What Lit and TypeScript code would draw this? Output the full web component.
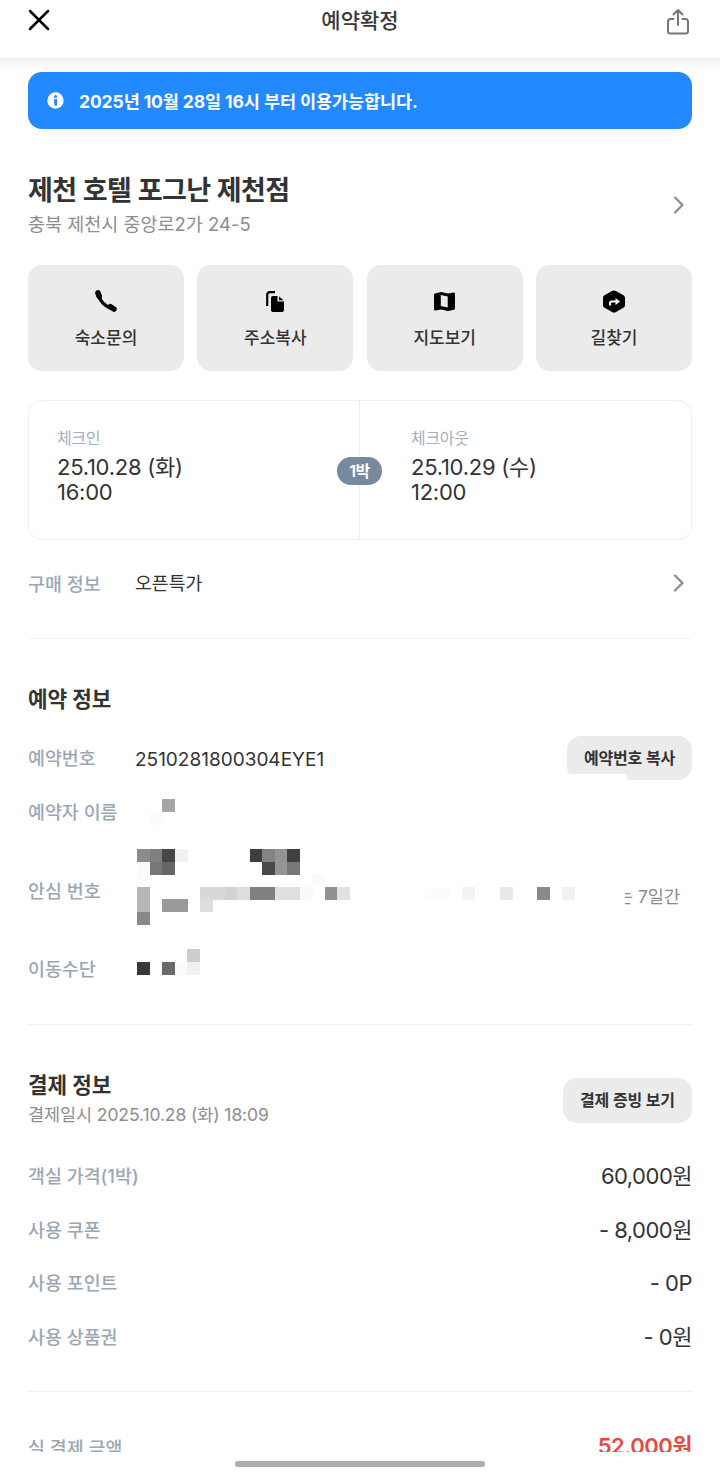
import { LitElement, html, css, svg } from "lit";
import { customElement } from "lit/decorators.js";

const cell = (x: number, y: number, c: string, w = 12.5, h = 12.5) =>
  html`<i class="cell" style="left:${x}px;top:${y}px;width:${w}px;height:${h}px;background:${c}"></i>`;

const mosaic: [number, number, string, number?, number?][] = [
  [162, 799, "#a6a6a6"], [150, 812, "#fbfbfb"],
  [137, 849, "#8c8c8c"], [150, 849, "#808080"], [162, 849, "#474747"], [175, 849, "#f1f1f1"],
  [250, 849, "#3e3e3e"], [262, 849, "#848484"], [275, 849, "#939393"], [287, 849, "#404040"],
  [137, 862, "#fafafa"], [150, 862, "#777"], [162, 862, "#666"],
  [262, 862, "#484848"], [275, 862, "#959595"], [287, 862, "#777"],
  [137, 887, "#b6b6b6"], [200, 887, "#d8d8d8"], [212, 887, "#d8d8d8"], [225, 887, "#d2d2d2"], [237, 887, "#ddd"],
  [250, 887, "#808080"], [262, 887, "#808080"], [275, 887, "#e0e0e0"], [287, 887, "#e0e0e0"], [300, 887, "#fafafa"],
  [325, 887, "#929292"], [337, 887, "#e2e2e2"], [425, 887, "#fcfcfc", 25],
  [462, 887, "#f3f3f3"], [500, 887, "#e8e8e8"], [537, 887, "#8a8a8a"], [562, 887, "#f1f1f1"],
  [312, 874, "#fafafa"], [137, 874, "#fcfcfc"],
  [137, 899, "#b6b6b6"], [162, 899, "#999"], [175, 899, "#999"], [200, 899, "#ddd"],
  [137, 912, "#888"],
  [187, 949, "#cdcdcd"],
  [137, 962, "#383838"], [162, 962, "#6a6a6a"], [175, 962, "#fbfbfb"], [187, 962, "#f1f1f1"],
  [605, 878, "#fff", 20, 34],
];

@customElement("app-root")
export class AppRoot extends LitElement {
  static styles = css`
    :host {
      display: block;
      position: relative;
      width: 720px;
      height: 1474px;
      overflow: hidden;
      background: #fff;
      color: #333;
      font-family: Inter, "Noto Sans CJK KR", sans-serif;
    }
    svg { display: block; }
    .header {
      height: 58px;
      display: flex;
      align-items: center;
      justify-content: space-between;
      padding: 0 30px 0 28px;
      position: relative;
      background: #fff;
    }
    .header .close { margin-top: -19px; }
    .header .share { margin-top: -15px; }
    .header h1 {
      position: absolute;
      left: 0; right: 0; top: 6px;
      margin: 0;
      text-align: center;
      font-size: 21px;
      line-height: 30px;
      font-weight: 500;
      color: #3a3a3a;
    }
    .shade { height: 14px; background: linear-gradient(#f3f3f3, #fff); }
    main { padding: 0 28px; }
    .banner {
      height: 57px;
      border-radius: 14px;
      background: #2389ff;
      display: flex;
      align-items: center;
      gap: 15px;
      padding: 0 19px;
      color: #fff;
      font-size: 17.5px;
      font-weight: 700;
      letter-spacing: -0.1px;
    }
    .hotel { margin-top: 45px; display: flex; align-items: center; justify-content: space-between; }
    .hotel h2 { margin: 0; font-size: 27px; line-height: 34px; font-weight: 600; letter-spacing: -0.55px; color: #333; }
    .hotel p { margin: 3px 0 0; font-size: 18.5px; line-height: 27px; color: #8e8e8e; }
    .chev { margin: -2px 6px 0 0; flex: none; }
    .actions { margin-top: 27px; display: grid; grid-template-columns: repeat(4, 1fr); gap: 13.33px; }
    .action {
      height: 106px;
      border-radius: 14px;
      background: #ebebeb;
      display: flex;
      flex-direction: column;
      align-items: center;
      box-sizing: border-box;
      font-size: 17px;
      line-height: 26px;
      font-weight: 500;
      color: #333;
    }
    .ic { height: 24px; margin: 24px 0 12px; display: flex; align-items: center; justify-content: center; }
    .dates {
      margin-top: 29px;
      height: 140px;
      box-sizing: border-box;
      border: 1px solid #eee;
      border-radius: 14px;
      display: grid;
      grid-template-columns: 330px 1fr;
      position: relative;
    }
    .date { padding: 26px 0 0 28px; font-size: 22px; line-height: 25px; color: #333; letter-spacing: -0.25px; }
    .date + .date { border-left: 1px solid #eee; padding-left: 51px; }
    .date small { display: block; font-size: 16px; line-height: 22px; color: #a4afbb; letter-spacing: -0.3px; margin-bottom: 6px; }
    .nights {
      position: absolute;
      left: 308px; top: 56px;
      width: 45px; height: 28px;
      border-radius: 14px;
      background: #78899e;
      color: #fff;
      font-size: 16px;
      line-height: 28px;
      font-weight: 600;
      text-align: center;
      letter-spacing: -0.5px;
    }
    .row { display: flex; align-items: center; }
    .label { width: 107px; flex: none; font-size: 18.4px; line-height: 26px; font-weight: 500; color: #9aa7b4; }
    .purchase { margin-top: 31px; height: 26px; }
    .purchase .val { flex: 1; font-size: 18.3px; color: #333; margin: -2px 0 2px; }
    hr { border: 0; border-top: 1px solid #f1f2f4; margin: 0; }
    .d1 { margin-top: 41px; }
    h3 { margin: 0; font-size: 21.3px; line-height: 30px; font-weight: 700; color: #333; }
    .resv h3 { margin-top: 45px; }
    .btn {
      height: 44px;
      border-radius: 14px;
      background: #ebebeb;
      font-size: 16px;
      line-height: 44px;
      font-weight: 600;
      letter-spacing: -0.2px;
      color: #333;
      text-align: center;
      flex: none;
    }
    .r1 { margin-top: 22px; justify-content: space-between; }
    .r1 .label { margin-top: -1px; }
    .r1 .val { flex: 1; font-size: 19px; padding-top: 2px; }
    .r1 .btn { width: 125px; }
    .r2 { margin-top: 19px; }
    .r3 { margin-top: 53px; }
    .r3 .val { flex: 1; text-align: right; font-size: 17.5px; line-height: 26px; color: #8a8a8a; margin: 6px 12px -6px 0; }
    .r4 { margin-top: 52px; }
    .d2 { margin-top: 42px; }
    .pay { margin-top: 45px; display: flex; justify-content: space-between; align-items: flex-start; }
    .pay p { margin: 3px 0 0; font-size: 17.5px; line-height: 24px; color: #8e8e8e; letter-spacing: -0.1px; }
    .pay .btn { width: 129px; height: 45px; line-height: 45px; margin-top: 8px; }
    .lines { margin-top: 36px; display: grid; row-gap: 27.7px; }
    .line { display: flex; justify-content: space-between; align-items: center; height: 26px; }
    .line .label { width: auto; }
    .line .amt { font-size: 22px; line-height: 26px; letter-spacing: -0.5px; color: #333; margin: 0; }
    .d3 { margin-top: 41px; }
    .total { margin-top: 43px; }
    .total .amt { font-weight: 600; color: #e34b45; font-size: 22px; margin: -2px 0 2px; }
    .bottom {
      position: absolute;
      left: 0; right: 0; bottom: 0;
      height: 22px;
      background: #fff;
    }
    .home {
      position: absolute;
      left: 235px; top: 9px;
      width: 250px; height: 6px;
      border-radius: 3px;
      background: #adadad;
    }
    .cell { position: absolute; display: block; }
  `;

  private chevron() {
    return html`<svg class="chev" width="14" height="20" viewBox="0 0 14 20" fill="none" stroke="#8f8f8f" stroke-width="2.4" stroke-linecap="round" stroke-linejoin="round"><path d="M3 2.5 10.5 10 3 17.5"/></svg>`;
  }

  private icon(kind: string) {
    if (kind === "phone")
      return svg`<svg width="22" height="22" viewBox="0 0 22 22" fill="none" stroke="#000" stroke-linecap="round"><path stroke-width="3.4" d="M3.500 5C5 11 10 16.500 17 18.500"/><path stroke-width="5.600" d="M3 3 4.200 6.300M15.500 16.800 19 19"/></svg>`;
    if (kind === "copy")
      return svg`<svg width="18" height="21" viewBox="0 0 18 21"><path fill="none" stroke="#000" stroke-width="2.200" d="M1.200 15V4C1.200 2.200 2.200 1.200 4 1.200H9"/><path fill="#000" d="M7 5H11.500V10.500H18V19C18 20.200 17.200 21 16 21H7C5.800 21 5 20.200 5 19V7C5 5.800 5.800 5 7 5Z"/><path fill="#000" d="M13 5.500 17.500 9.300H13Z"/></svg>`;
    if (kind === "map")
      return svg`<svg width="21" height="19" viewBox="0 0 21 19"><path fill="#000" fill-rule="evenodd" d="M1 1.500 7 0 14 1.500 19.500.5C20.500.5 21 1 21 2V16C21 17 20.500 17.500 20 17.700L14 19 7 17.500 1.500 18.500C.5 18.500 0 18 0 17V2.500C0 2 .5 1.700 1 1.500ZM6.800 3V14L13.700 15.500V4.500Z"/></svg>`;
    return svg`<svg width="22" height="23" viewBox="0 0 22 23"><path fill="#000" d="M9 1C10 .3 12 .3 13 1L20 5C21.300 5.800 22 6.700 22 8V15C22 16.300 21.300 17.200 20 18L13 22C12 22.700 10 22.700 9 22L2 18C.7 17.200 0 16.300 0 15V8C0 6.700 .7 5.800 2 5Z"/><path fill="none" stroke="#fff" stroke-width="2" d="M7 15.500V13C7 12 7.500 11.500 8.500 11.500H13"/><path fill="#fff" d="M12.500 8 17 11.500 12.500 15Z"/></svg>`;
  }

  render() {
    return html`
      <div class="header">
        <svg class="close" width="22" height="22" viewBox="0 0 22 22" fill="none" stroke="#000" stroke-width="2.500" stroke-linecap="round"><path d="M2 2 20 20M20 2 2 20"/></svg>
        <h1>예약확정</h1>
        <svg class="share" width="24" height="28" viewBox="0 0 24 28" fill="none" stroke="#777" stroke-width="2" stroke-linecap="round" stroke-linejoin="round"><path d="M12 2v15M7.500 6.500 12 2l4.500 4.500M7.500 11H4.500C2.800 11 2 12 2 13.500V23c0 1.500.8 2.500 2.500 2.500h15c1.700 0 2.500-1 2.500-2.500v-9.500C22 12 21.200 11 19.500 11h-3"/></svg>
      </div>
      <div class="shade"></div>
      <main>
        <div class="banner">
          <svg width="17" height="17" viewBox="0 0 17 17"><circle cx="8.500" cy="8.500" r="8.200" fill="#fff"/><rect x="7.200" y="7" width="2.800" height="6.500" fill="#2389ff"/><circle cx="8.600" cy="4.600" r="1.500" fill="#2389ff"/></svg>
          <span>2025년 10월 28일 16시 부터 이용가능합니다.</span>
        </div>

        <div class="hotel">
          <div>
            <h2>제천 호텔 포그난 제천점</h2>
            <p>충북 제천시 중앙로2가 24-5</p>
          </div>
          ${this.chevron()}
        </div>

        <div class="actions">
          <div class="action"><div class="ic">${this.icon("phone")}</div><span>숙소문의</span></div>
          <div class="action"><div class="ic">${this.icon("copy")}</div><span>주소복사</span></div>
          <div class="action"><div class="ic">${this.icon("map")}</div><span>지도보기</span></div>
          <div class="action"><div class="ic">${this.icon("dir")}</div><span>길찾기</span></div>
        </div>

        <div class="dates">
          <div class="date"><small>체크인</small>25.10.28 (화)<br />16:00</div>
          <div class="date"><small>체크아웃</small>25.10.29 (수)<br />12:00</div>
          <div class="nights">1박</div>
        </div>

        <div class="row purchase">
          <span class="label">구매 정보</span>
          <span class="val">오픈특가</span>
          ${this.chevron()}
        </div>

        <hr class="d1" />

        <section class="resv">
          <h3>예약 정보</h3>
          <div class="row r1">
            <span class="label">예약번호</span>
            <span class="val">2510281800304EYE1</span>
            <span class="btn">예약번호 복사</span>
          </div>
          <div class="row r2"><span class="label">예약자 이름</span></div>
          <div class="row r3"><span class="label">안심 번호</span><span class="val">는 7일간</span></div>
          <div class="row r4"><span class="label">이동수단</span></div>
        </section>

        <hr class="d2" />

        <section>
          <div class="pay">
            <div>
              <h3>결제 정보</h3>
              <p>결제일시 2025.10.28 (화) 18:09</p>
            </div>
            <span class="btn">결제 증빙 보기</span>
          </div>
          <div class="lines">
            <div class="line"><span class="label">객실 가격(1박)</span><span class="amt">60,000원</span></div>
            <div class="line"><span class="label">사용 쿠폰</span><span class="amt">- 8,000원</span></div>
            <div class="line"><span class="label">사용 포인트</span><span class="amt">- 0P</span></div>
            <div class="line"><span class="label">사용 상품권</span><span class="amt">- 0원</span></div>
          </div>
        </section>

        <hr class="d3" />

        <div class="line total"><span class="label">실 결제 금액</span><span class="amt">52,000원</span></div>
      </main>

      ${cell(567, 774, "#fff", 60, 7)}
      ${mosaic.map(([x, y, c, w, h]) => cell(x, y, c, w ?? 12.5, h ?? 12.5))}

      <div class="bottom"><div class="home"></div></div>
    `;
  }
}
